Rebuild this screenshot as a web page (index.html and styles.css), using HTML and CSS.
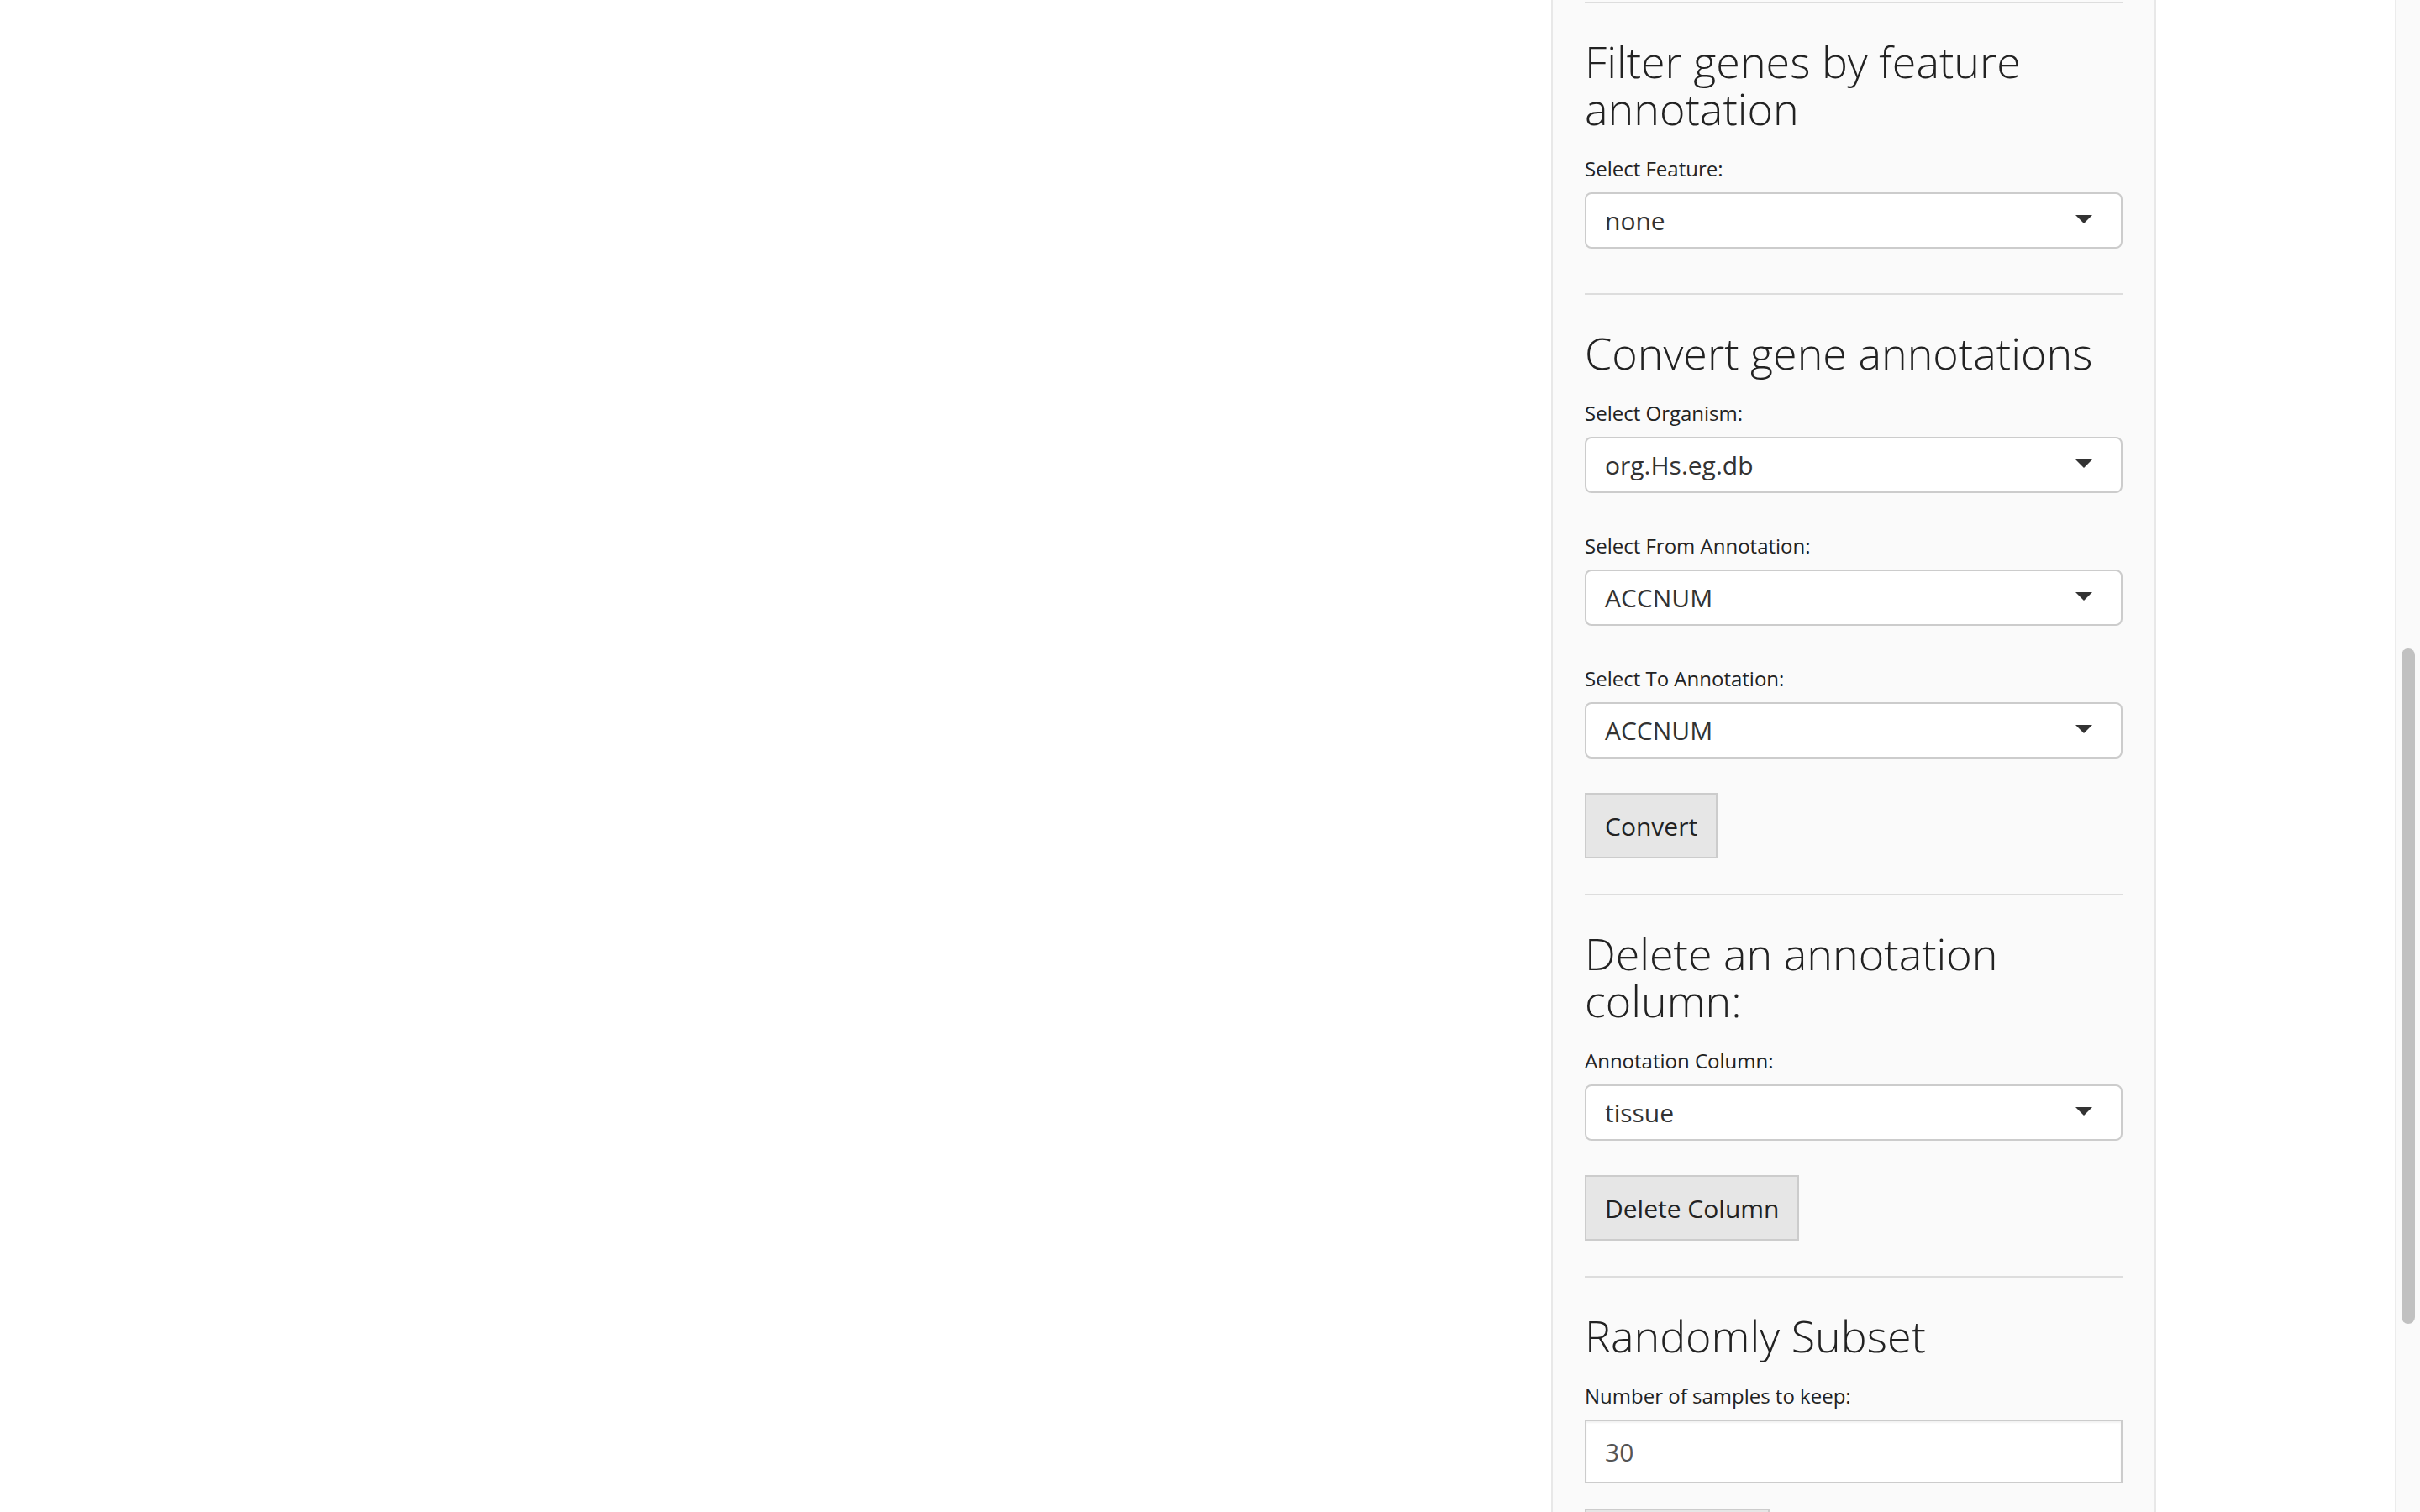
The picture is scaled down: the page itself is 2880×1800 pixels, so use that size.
FILE: index.html
```html
<!DOCTYPE html>
<html lang="en">
<head>
<meta charset="utf-8">
<title>Annotation tools</title>
<link rel="stylesheet" href="styles.css">
</head>
<body>
<div class="page">
  <main class="main"></main>
  <aside class="well">
    <section class="block">
      <h3 class="title">Filter genes by feature annotation</h3>
      <div class="form-group">
        <label class="label">Select Feature:</label>
        <div class="select"><span class="select-value">none</span><i class="caret"></i></div>
      </div>
    </section>
    <section class="block">
      <h3 class="title">Convert gene annotations</h3>
      <div class="form-group">
        <label class="label">Select Organism:</label>
        <div class="select"><span class="select-value">org.Hs.eg.db</span><i class="caret"></i></div>
      </div>
      <div class="form-group">
        <label class="label">Select From Annotation:</label>
        <div class="select"><span class="select-value">ACCNUM</span><i class="caret"></i></div>
      </div>
      <div class="form-group">
        <label class="label">Select To Annotation:</label>
        <div class="select"><span class="select-value">ACCNUM</span><i class="caret"></i></div>
      </div>
      <div class="actions"><button class="btn" type="button">Convert</button></div>
    </section>
    <section class="block">
      <h3 class="title">Delete an annotation column:</h3>
      <div class="form-group">
        <label class="label">Annotation Column:</label>
        <div class="select"><span class="select-value">tissue</span><i class="caret"></i></div>
      </div>
      <div class="actions"><button class="btn" type="button">Delete Column</button></div>
    </section>
    <section class="block">
      <h3 class="title">Randomly Subset</h3>
      <div class="form-group form-group-num">
        <label class="label">Number of samples to keep:</label>
        <div class="input"><span class="input-value">30</span></div>
      </div>
      <div class="actions"><button class="btn btn-wide" type="button">Subset Data</button></div>
    </section>
  </aside>
  <div class="spacer"></div>
  <div class="scrollbar"><div class="thumb"></div></div>
</div>
</body>
</html>
```
FILE: styles.css
```css
html, body {
  margin: 0;
  padding: 0;
  background: #ffffff;
}

body {
  font-family: "Open Sans", "Liberation Sans", sans-serif;
  color: #222222;
}

.page {
  display: flex;
  height: 1800px;
  overflow: hidden;
}

.main {
  flex: 0 0 1846px;
}

.well {
  flex: 0 0 auto;
  width: 640px;
  height: 1800px;
  box-sizing: border-box;
  width: 720px;
  padding: 2px 38px 0;
  background: #fafafa;
  border-left: 2px solid #e8e8e8;
  border-right: 2px solid #e8e8e8;
  overflow: hidden;
  display: flex;
  flex-direction: column;
}

.block {
  display: flex;
  flex-direction: column;
  border-top: 2px solid #dddddd;
  padding: 41px 0 12px;
}

.title {
  margin: 0 0 22px;
  font-size: 52px;
  line-height: 56px;
  font-weight: 300;
  color: #222222;
}

.form-group {
  display: flex;
  flex-direction: column;
  margin-bottom: 41px;
}

.form-group-num {
  margin-bottom: 30px;
}

.label {
  display: block;
  padding-top: 5px;
  margin-bottom: 11px;
  font-size: 24px;
  line-height: 34px;
  font-weight: 400;
  color: #222222;
}

.select {
  display: flex;
  align-items: center;
  justify-content: space-between;
  box-sizing: border-box;
  height: 67px;
  padding: 0 34px 0 22px;
  background: #ffffff;
  border: 2px solid #cccccc;
  border-radius: 8px;
  font-size: 30px;
  color: #333333;
}

.caret {
  display: block;
  width: 0;
  height: 0;
  margin-top: -4px;
  border-left: 10px solid transparent;
  border-right: 10px solid transparent;
  border-top: 10px solid #333333;
}

.input {
  display: flex;
  align-items: center;
  box-sizing: border-box;
  height: 76px;
  padding: 0 22px;
  background: #ffffff;
  border: 2px solid #cccccc;
  box-shadow: inset 0 2px 2px rgba(0, 0, 0, 0.05);
  font-size: 30px;
  color: #555555;
}

.actions {
  display: flex;
  margin-bottom: 30px;
}

.btn {
  box-sizing: border-box;
  height: 78px;
  padding: 0 22px;
  margin: 0;
  background: #e6e6e6;
  border: 2px solid #cccccc;
  border-radius: 0;
  font-family: "Open Sans", "Liberation Sans", sans-serif;
  font-size: 30px;
  color: #222222;
}

.btn-wide {
  width: 220px;
}

.spacer {
  flex: 1 1 auto;
}

.scrollbar {
  flex: 0 0 30px;
  box-sizing: border-box;
  height: 1800px;
  background: #fafafa;
  border-left: 2px solid #ececec;
  padding-left: 6px;
}

.thumb {
  width: 16px;
  height: 804px;
  margin-top: 772px;
  border-radius: 8px;
  background: #c1c1c1;
}
```
